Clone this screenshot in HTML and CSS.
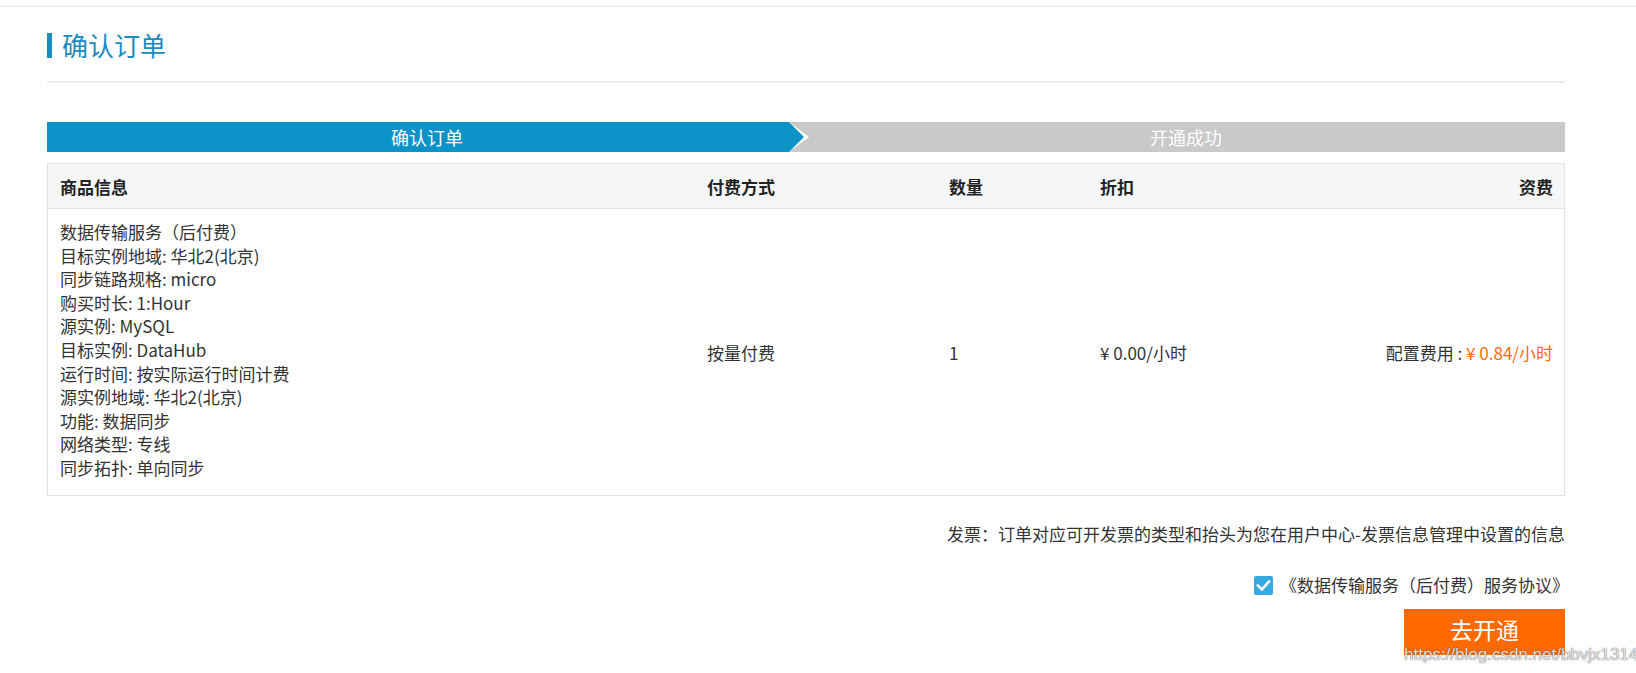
FILE: index.html
```html
<!DOCTYPE html>
<html lang="zh-CN">
<head>
<meta charset="utf-8">
<title>确认订单</title>
<link rel="stylesheet" href="styles.css">
</head>
<body>
<div class="topline"></div>
<div class="page">
  <h1 class="title">确认订单</h1>

  <div class="steps">
    <div class="step step-active"><span class="step-text">确认订单</span></div>
    <div class="step step-next"><span class="step-text">开通成功</span></div>
  </div>

  <div class="table">
    <div class="row head">
      <div class="cell">商品信息</div>
      <div class="cell">付费方式</div>
      <div class="cell">数量</div>
      <div class="cell">折扣</div>
      <div class="cell right">资费</div>
    </div>
    <div class="row body">
      <div class="cell info">
        <div>数据传输服务（后付费）</div>
        <div>目标实例地域: 华北2(北京)</div>
        <div>同步链路规格: micro</div>
        <div>购买时长: 1:Hour</div>
        <div>源实例: MySQL</div>
        <div>目标实例: DataHub</div>
        <div>运行时间: 按实际运行时间计费</div>
        <div>源实例地域: 华北2(北京)</div>
        <div>功能: 数据同步</div>
        <div>网络类型: 专线</div>
        <div>同步拓扑: 单向同步</div>
      </div>
      <div class="cell mid">按量付费</div>
      <div class="cell mid">1</div>
      <div class="cell mid">¥ 0.00/小时</div>
      <div class="cell mid right">配置费用 : <span class="price">¥ 0.84/小时</span></div>
    </div>
  </div>

  <p class="invoice">发票：订单对应可开发票的类型和抬头为您在用户中心-发票信息管理中设置的信息</p>

  <div class="agree">
    <svg class="check" width="19" height="19" viewBox="0 0 19 19" aria-hidden="true">
      <rect x="0" y="0" width="19" height="19" rx="2" fill="#37a9e1"/>
      <path d="M4 9.6 L7.9 13.4 L15 5.6" fill="none" stroke="#fff" stroke-width="2.6" stroke-linecap="square"/>
    </svg>
    <span>《数据传输服务（后付费）服务协议》</span>
  </div>

  <div class="actions">
    <button class="btn">去开通</button>
  </div>
</div>
<div class="watermark">https://blog.csdn.net/bbvjx1314</div>
</body>
</html>
```

FILE: styles.css
```css
html, body {
  margin: 0;
  padding: 0;
  background: #ffffff;
}

body {
  font-family: "Noto Sans CJK SC", "Noto Sans", sans-serif;
  color: #333333;
  font-size: 17px;
  position: relative;
  min-height: 673px;
  overflow: hidden;
}

.topline {
  margin-top: 5px;
  border-top: 2px solid #efefef;
}

.page {
  padding: 0 71px 0 47px;
}

.title {
  margin: 18px 0 0 0;
  display: flex;
  align-items: center;
  height: 40px;
  padding-bottom: 16px;
  border-bottom: 2px solid #ececec;
  font-size: 26px;
  font-weight: normal;
  color: #1a8cc1;
  line-height: 40px;
}

.title::before {
  content: "";
  width: 5px;
  height: 25px;
  background: #1a8cc1;
  margin-right: 10px;
}

.steps {
  margin-top: 39px;
  height: 30px;
  display: flex;
  background: #c8c9c8;
  color: #ffffff;
  font-size: 18px;
  line-height: 30px;
}

.step {
  position: relative;
  display: flex;
  justify-content: center;
}

.step-active {
  width: 760px;
}

.step-active::before,
.step-active::after {
  content: "";
  position: absolute;
  top: 0;
  left: 0;
  height: 30px;
}

.step-active::before {
  width: 762px;
  background: #ffffff;
  clip-path: polygon(0 0, 742px 0, 762px 50%, 742px 100%, 0 100%);
}

.step-active::after {
  width: 757px;
  background: #0b92c6;
  clip-path: polygon(0 0, 742px 0, 757px 50%, 742px 100%, 0 100%);
}

.step-next {
  flex: 1;
}

.step-text {
  position: relative;
  z-index: 1;
}

.table {
  margin-top: 11px;
  border: 1px solid #e2e3e4;
}

.row {
  display: grid;
  grid-template-columns: 647px 242px 151px 200px 1fr;
}

.head {
  height: 44px;
  align-items: center;
  background: #f5f6f8;
  border-bottom: 1px solid #e3e4e6;
  font-weight: bold;
  color: #222222;
}

.cell {
  padding-left: 12px;
}

.cell.right {
  text-align: right;
  padding-left: 0;
  padding-right: 11px;
}

.body {
  min-height: 286px;
}

.info {
  padding-top: 11px;
  padding-bottom: 15px;
  line-height: 23.6px;
}

.mid {
  align-self: center;
}

.price {
  color: #ff6a0a;
}

.invoice {
  margin: 26px 0 0 0;
  text-align: right;
  line-height: 24px;
  color: #333333;
}

.agree {
  margin-top: 27px;
  margin-right: -4px;
  display: flex;
  justify-content: flex-end;
  align-items: center;
  gap: 7px;
  line-height: 24px;
}

.check {
  display: block;
}

.actions {
  margin-top: 12px;
  display: flex;
  justify-content: flex-end;
}

.btn {
  width: 161px;
  height: 46px;
  border: none;
  background: #ff6a00;
  color: #ffffff;
  font-family: "Noto Sans CJK SC", sans-serif;
  font-size: 23px;
  line-height: 40px;
  padding: 0 0 6px 0;
}

.watermark {
  position: absolute;
  left: 1404px;
  top: 645px;
  font-family: "Liberation Sans", Arial, sans-serif;
  font-size: 17px;
  line-height: 20px;
  color: rgba(255, 255, 255, 0.85);
  text-shadow: 0 0 1px rgba(60, 60, 60, 0.8), 0 0 1px rgba(60, 60, 60, 0.6);
  white-space: nowrap;
}
```
